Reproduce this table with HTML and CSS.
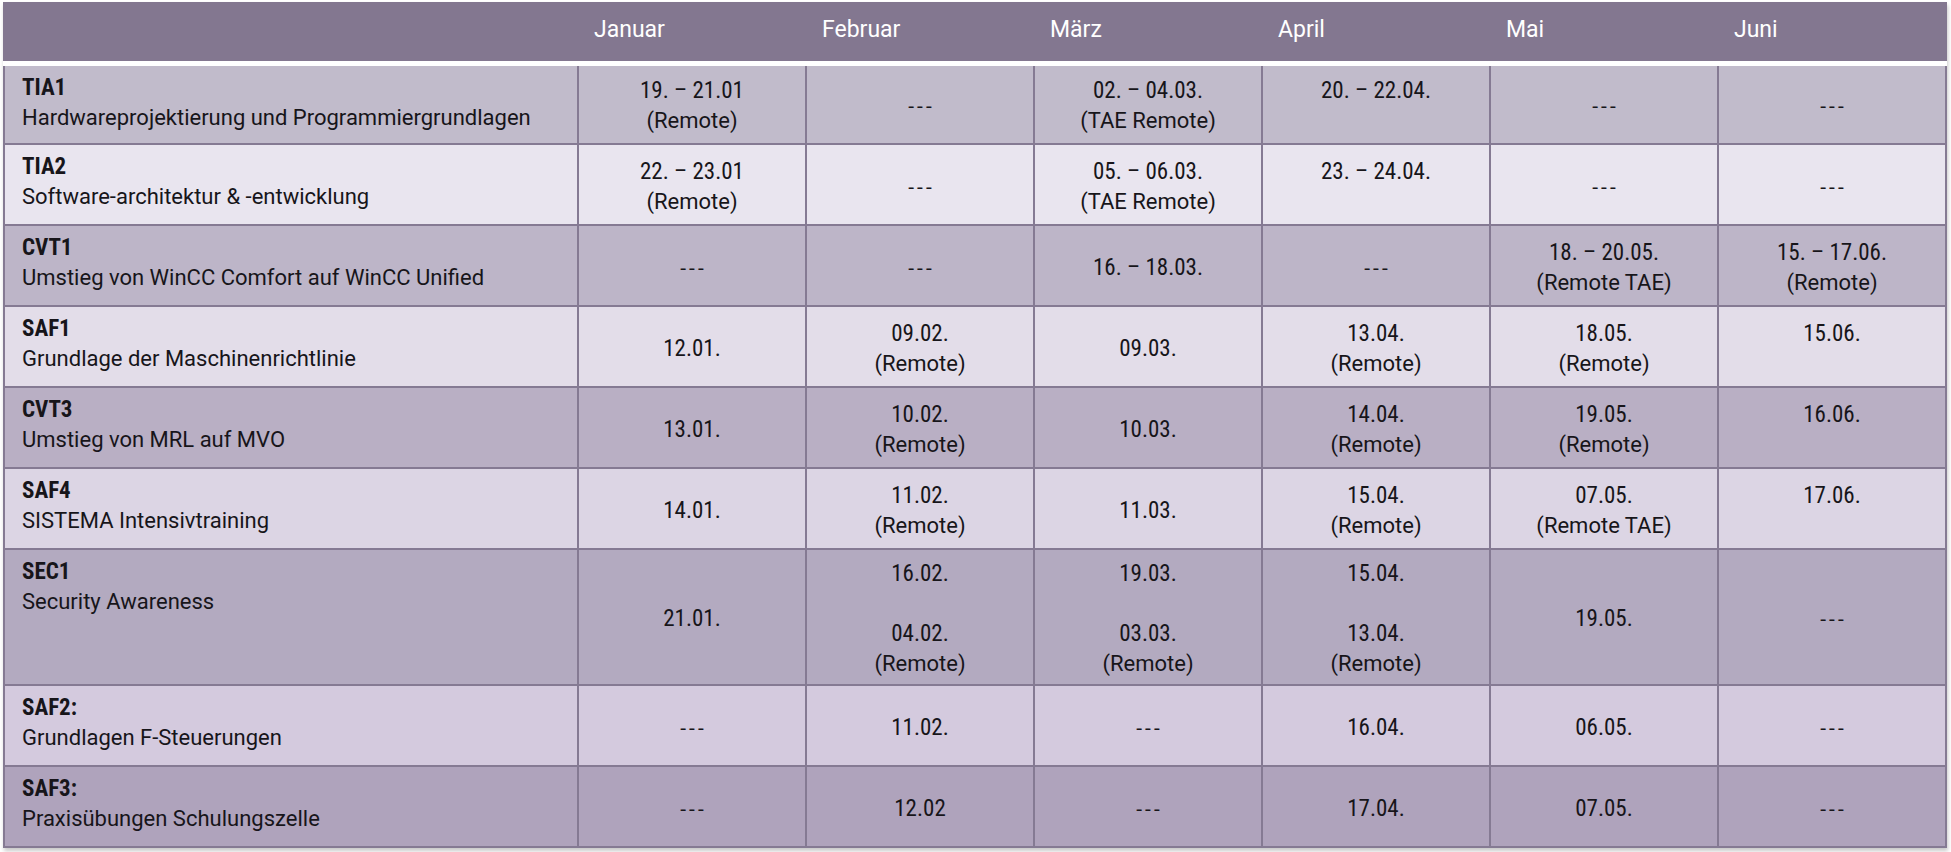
FILE: index.html
```html
<!DOCTYPE html>
<html lang="de">
<head>
<meta charset="utf-8">
<title>Schulungsplan</title>
<link rel="stylesheet" href="styles.css">
</head>
<body>
<div class="wrap">
<table class="plan">
  <colgroup>
    <col class="c-name">
    <col class="c-month"><col class="c-month"><col class="c-month">
    <col class="c-month"><col class="c-month"><col class="c-month">
  </colgroup>
  <thead>
    <tr>
      <th></th><th>Januar</th><th>Februar</th><th>März</th><th>April</th><th>Mai</th><th>Juni</th>
    </tr>
  </thead>
  <tbody>
    <tr class="r1">
      <td class="name"><span class="code">TIA1</span><span class="desc">Hardwareprojektierung und Programmiergrundlagen</span></td>
      <td><span class="d">19. – 21.01</span><span class="n">(Remote)</span></td>
      <td><span class="nil">---</span></td>
      <td><span class="d">02. – 04.03.</span><span class="n">(TAE Remote)</span></td>
      <td><span class="d">20. – 22.04.</span><span class="blank"></span></td>
      <td><span class="nil">---</span></td>
      <td><span class="nil">---</span></td>
    </tr>
    <tr class="r2">
      <td class="name"><span class="code">TIA2</span><span class="desc">Software-architektur &amp; -entwicklung</span></td>
      <td><span class="d">22. – 23.01</span><span class="n">(Remote)</span></td>
      <td><span class="nil">---</span></td>
      <td><span class="d">05. – 06.03.</span><span class="n">(TAE Remote)</span></td>
      <td><span class="d">23. – 24.04.</span><span class="blank"></span></td>
      <td><span class="nil">---</span></td>
      <td><span class="nil">---</span></td>
    </tr>
    <tr class="r3">
      <td class="name"><span class="code">CVT1</span><span class="desc">Umstieg von WinCC Comfort auf WinCC Unified</span></td>
      <td><span class="nil">---</span></td>
      <td><span class="nil">---</span></td>
      <td><span class="d">16. – 18.03.</span></td>
      <td><span class="nil">---</span></td>
      <td><span class="d">18. – 20.05.</span><span class="n">(Remote TAE)</span></td>
      <td><span class="d">15. – 17.06.</span><span class="n">(Remote)</span></td>
    </tr>
    <tr class="r4">
      <td class="name"><span class="code">SAF1</span><span class="desc">Grundlage der Maschinenrichtlinie</span></td>
      <td><span class="d">12.01.</span></td>
      <td><span class="d">09.02.</span><span class="n">(Remote)</span></td>
      <td><span class="d">09.03.</span></td>
      <td><span class="d">13.04.</span><span class="n">(Remote)</span></td>
      <td><span class="d">18.05.</span><span class="n">(Remote)</span></td>
      <td><span class="d">15.06.</span><span class="blank"></span></td>
    </tr>
    <tr class="r5">
      <td class="name"><span class="code">CVT3</span><span class="desc">Umstieg von MRL auf MVO</span></td>
      <td><span class="d">13.01.</span></td>
      <td><span class="d">10.02.</span><span class="n">(Remote)</span></td>
      <td><span class="d">10.03.</span></td>
      <td><span class="d">14.04.</span><span class="n">(Remote)</span></td>
      <td><span class="d">19.05.</span><span class="n">(Remote)</span></td>
      <td><span class="d">16.06.</span><span class="blank"></span></td>
    </tr>
    <tr class="r6">
      <td class="name"><span class="code">SAF4</span><span class="desc">SISTEMA Intensivtraining</span></td>
      <td><span class="d">14.01.</span></td>
      <td><span class="d">11.02.</span><span class="n">(Remote)</span></td>
      <td><span class="d">11.03.</span></td>
      <td><span class="d">15.04.</span><span class="n">(Remote)</span></td>
      <td><span class="d">07.05.</span><span class="n">(Remote TAE)</span></td>
      <td><span class="d">17.06.</span><span class="blank"></span></td>
    </tr>
    <tr class="r7 tall">
      <td class="name"><span class="code">SEC1</span><span class="desc">Security Awareness</span></td>
      <td><span class="d">21.01.</span></td>
      <td><span class="d">16.02.</span><span class="blank"></span><span class="d">04.02.</span><span class="n">(Remote)</span></td>
      <td><span class="d">19.03.</span><span class="blank"></span><span class="d">03.03.</span><span class="n">(Remote)</span></td>
      <td><span class="d">15.04.</span><span class="blank"></span><span class="d">13.04.</span><span class="n">(Remote)</span></td>
      <td><span class="d">19.05.</span></td>
      <td><span class="nil">---</span></td>
    </tr>
    <tr class="r8">
      <td class="name"><span class="code">SAF2:</span><span class="desc">Grundlagen F-Steuerungen</span></td>
      <td><span class="nil">---</span></td>
      <td><span class="d">11.02.</span></td>
      <td><span class="nil">---</span></td>
      <td><span class="d">16.04.</span></td>
      <td><span class="d">06.05.</span></td>
      <td><span class="nil">---</span></td>
    </tr>
    <tr class="r9">
      <td class="name"><span class="code">SAF3:</span><span class="desc">Praxisübungen Schulungszelle</span></td>
      <td><span class="nil">---</span></td>
      <td><span class="d">12.02</span></td>
      <td><span class="nil">---</span></td>
      <td><span class="d">17.04.</span></td>
      <td><span class="d">07.05.</span></td>
      <td><span class="nil">---</span></td>
    </tr>
  </tbody>
</table>
</div>
</body>
</html>
```

FILE: styles.css
```css
html, body {
  margin: 0;
  padding: 0;
  background: #ffffff;
}

body {
  font-family: Roboto, "Liberation Sans", Arial, sans-serif;
  color: #17151a;
}

.wrap {
  padding: 2px 5px 6px 3px;
}

.plan {
  border-collapse: collapse;
  table-layout: fixed;
  width: 1943px;
  box-shadow: 1px 3px 4px rgba(0, 0, 0, 0.22);
}

.c-name { width: 574px; }
.c-month { width: 228px; }

.plan thead th {
  box-sizing: border-box;
  background: #837790;
  color: #ffffff;
  font-weight: 400;
  font-size: 23px;
  text-align: left;
  height: 61px;
  padding: 0 0 4px 16px;
  border-bottom: 5px solid #ffffff;
}

.plan thead th:first-child { border-left: 2px solid #837790; }
.plan thead th:last-child { border-right: 2px solid #837790; }

.plan tbody td {
  box-sizing: border-box;
  border: 2px solid #857a93;
  text-align: center;
  vertical-align: middle;
  font-size: 22px;
  line-height: 30px;
  padding: 4px 0 0 0;
  height: 81px;
}

.plan tbody tr.tall td { height: 136px; }

.plan tbody td.name {
  text-align: left;
  vertical-align: top;
  padding: 7px 0 0 17px;
}

.code {
  display: block;
  font-family: "Roboto Condensed", "Liberation Sans Narrow", Roboto, sans-serif;
  font-weight: 700;
  font-size: 23px;
}

.desc {
  display: block;
  font-size: 22px;
}

.d {
  display: block;
  font-family: "Roboto Condensed", "Liberation Sans Narrow", Roboto, sans-serif;
  font-size: 23px;
}

.n {
  display: block;
  font-size: 22px;
}

.blank {
  display: block;
  height: 30px;
}

.nil {
  display: block;
  letter-spacing: 3px;
  font-size: 21px;
  padding-left: 3px;
}

.r1 td { background: #c1bbcb; }
.r2 td { background: #e9e5ef; }
.r3 td { background: #bdb5c8; }
.r4 td { background: #e3dde9; }
.r5 td { background: #b9afc4; }
.r6 td { background: #dcd5e4; }
.r7 td { background: #b3aac0; }
.r8 td { background: #d4cade; }
.r9 td { background: #afa3bc; }
```
